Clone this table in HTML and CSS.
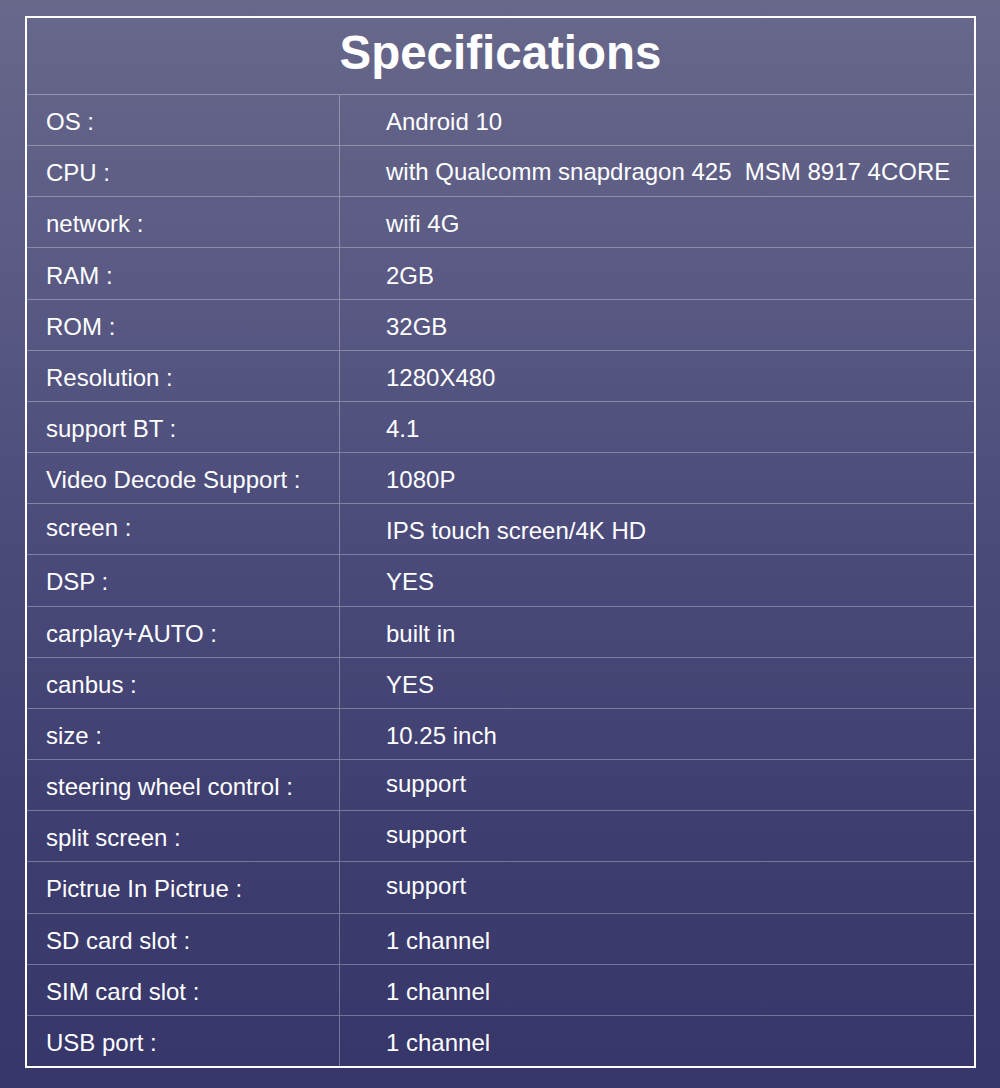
FILE: index.html
```html
<!DOCTYPE html>
<html lang="en">
<head>
<meta charset="utf-8">
<title>Specifications</title>
<link rel="stylesheet" href="styles.css">
</head>
<body>
<main class="sheet">
  <h1 class="title">Specifications</h1>
  <div class="row"><div class="label">OS :</div><div class="value">Android 10</div></div>
  <div class="row"><div class="label">CPU :</div><div class="value raise1">with Qualcomm snapdragon 425&nbsp; MSM 8917 4CORE</div></div>
  <div class="row"><div class="label">network :</div><div class="value">wifi 4G</div></div>
  <div class="row"><div class="label">RAM :</div><div class="value">2GB</div></div>
  <div class="row"><div class="label">ROM :</div><div class="value">32GB</div></div>
  <div class="row"><div class="label">Resolution :</div><div class="value">1280X480</div></div>
  <div class="row"><div class="label">support BT :</div><div class="value">4.1</div></div>
  <div class="row"><div class="label">Video Decode Support :</div><div class="value">1080P</div></div>
  <div class="row"><div class="label raise3">screen :</div><div class="value">IPS touch screen/4K HD</div></div>
  <div class="row"><div class="label">DSP :</div><div class="value">YES</div></div>
  <div class="row"><div class="label">carplay+AUTO :</div><div class="value">built in</div></div>
  <div class="row"><div class="label">canbus :</div><div class="value">YES</div></div>
  <div class="row"><div class="label">size :</div><div class="value">10.25 inch</div></div>
  <div class="row"><div class="label">steering wheel control :</div><div class="value raise3">support</div></div>
  <div class="row"><div class="label">split screen :</div><div class="value raise3">support</div></div>
  <div class="row"><div class="label">Pictrue In Pictrue :</div><div class="value raise3">support</div></div>
  <div class="row"><div class="label">SD card slot :</div><div class="value">1 channel</div></div>
  <div class="row"><div class="label">SIM card slot :</div><div class="value">1 channel</div></div>
  <div class="row"><div class="label">USB port :</div><div class="value">1 channel</div></div>
</main>
</body>
</html>
```

FILE: styles.css
```css
html, body {
  margin: 0;
  padding: 0;
}

body {
  width: 1000px;
  height: 1088px;
  overflow: hidden;
  background: linear-gradient(180deg, #68688b 0%, #5a5a84 25%, #4b4b7b 50%, #3e3e70 75%, #36366a 100%);
  font-family: "Liberation Sans", Arial, sans-serif;
  color: #ffffff;
  padding-top: 16px;
  box-sizing: border-box;
}

.sheet {
  margin-left: 25px;
  width: 951px;
  height: 1052px;
  box-sizing: border-box;
  border: 2px solid #ffffff;
  display: grid;
  grid-template-rows: 76px repeat(19, 1fr);
}

.title {
  margin: 0;
  box-sizing: border-box;
  padding-top: 11px;
  font-size: 47.5px;
  line-height: 48px;
  font-weight: bold;
  text-align: center;
  letter-spacing: 0;
}

.row {
  display: grid;
  grid-template-columns: 313px 1fr;
  border-top: 1px solid rgba(255, 255, 255, 0.3);
  font-size: 24px;
}

.label,
.value {
  display: flex;
  align-items: center;
  white-space: pre;
  padding-top: 4px;
}

.label {
  padding-left: 19px;
  border-right: 1px solid rgba(255, 255, 255, 0.3);
}

.value {
  padding-left: 46px;
}

.raise1 {
  padding-bottom: 2px;
}

.raise3 {
  padding-bottom: 6px;
}
```
